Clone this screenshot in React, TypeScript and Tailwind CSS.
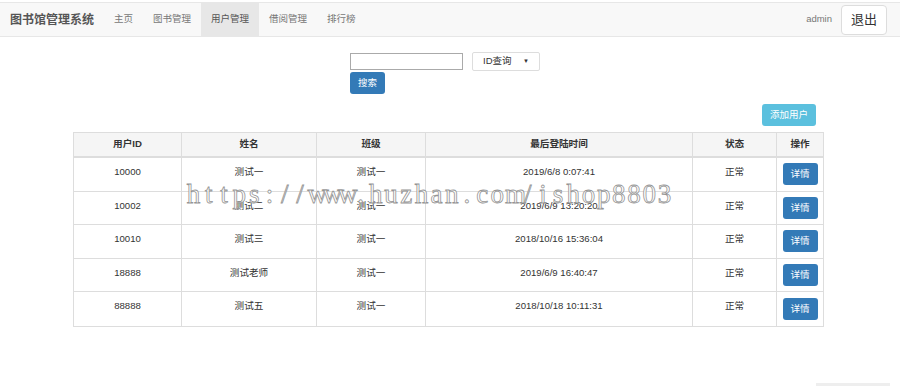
import React from "react";

const rows = [
  ["10000", "测试一", "测试一", "2019/6/8 0:07:41", "正常"],
  ["10002", "测试二", "测试一", "2019/6/9 13:20:20", "正常"],
  ["10010", "测试三", "测试一", "2018/10/16 15:36:04", "正常"],
  ["18888", "测试老师", "测试一", "2019/6/9 16:40:47", "正常"],
  ["88888", "测试五", "测试一", "2018/10/18 10:11:31", "正常"],
];

const widths = ["w-[108px]", "w-[135px]", "w-[109px]", "w-[267px]", "w-[84px]", "w-[46px]"];

const watermark = "https://www.huzhan.com/ishop8803".split("");

export default function App() {
  return (
    <div
      className="relative w-[900px] h-[387px] bg-white text-[#333] overflow-hidden"
      style={{ fontFamily: '"Liberation Sans", Arial, "Noto Sans CJK SC", sans-serif' }}
    >
      <div className="h-[2px]" />
      <div className="flex items-center h-[35px] bg-[#f8f8f8] border-t border-b border-[#e7e7e7]">
        <div className="pl-[10px] pr-[10px] text-[12px] font-bold text-[#555]">图书馆管理系统</div>
        <div className="flex h-full text-[9.5px] text-[#777]">
          <div className="px-[10px] flex items-center">主页</div>
          <div className="px-[10px] flex items-center">图书管理</div>
          <div className="px-[10px] flex items-center bg-[#e7e7e7] text-[#555]">用户管理</div>
          <div className="px-[10px] flex items-center">借阅管理</div>
          <div className="px-[10px] flex items-center">排行榜</div>
        </div>
        <div className="ml-auto flex items-center">
          <span className="text-[9.5px] text-[#777] mr-[9px]">admin</span>
          <div className="mr-[13px] w-[46px] h-[30px] flex items-center justify-center bg-white border border-[#ddd] rounded-[4px] text-[13px] text-[#333]">
            退出
          </div>
        </div>
      </div>

      <div className="flex flex-col items-start pl-[350px] pt-[15px]">
        <div className="flex items-center gap-[9px]">
          <div className="w-[113px] h-[17px] border border-[#aaa] bg-white" />
          <div className="w-[68px] h-[19px] border border-[#ddd] rounded-[2px] bg-white flex items-center justify-between px-[10px] text-[9.5px] text-[#333]">
            <span>ID查询</span>
            <span className="text-[6px]">▼</span>
          </div>
        </div>
        <div className="mt-[1px] w-[35px] h-[22px] bg-[#337ab7] rounded-[3px] text-white text-[9.5px] flex items-center justify-center">
          搜索
        </div>
      </div>

      <div className="flex justify-end pr-[84px] mt-[10px]">
        <div className="w-[54px] h-[22px] bg-[#5bc0de] rounded-[3px] text-white text-[9.5px] flex items-center justify-center">
          添加用户
        </div>
      </div>

      <div className="ml-[73px] mt-[6px] w-fit border border-[#ddd] text-[9.6px]">
        <div className="flex h-[25px] bg-[#f5f5f5] border-b-2 border-[#ddd] font-bold">
          {["用户ID", "姓名", "班级", "最后登陆时间", "状态", "操作"].map((h, i) => (
            <div
              key={h}
              className={`${widths[i]} flex items-center justify-center ${i < 5 ? "border-r border-[#ddd]" : ""}`}
            >
              {h}
            </div>
          ))}
        </div>
        {rows.map((r, ri) => (
          <div key={ri} className={`flex h-[33.6px] ${ri < rows.length - 1 ? "border-b border-[#ddd]" : ""}`}>
            {r.map((c, i) => (
              <div
                key={i}
                className={`${widths[i]} flex justify-center pt-[7px] border-r border-[#ddd]`}
              >
                {c}
              </div>
            ))}
            <div className={`${widths[5]} flex items-center justify-center`}>
              <div className="w-[35px] h-[22px] bg-[#337ab7] rounded-[3px] text-white flex items-center justify-center">
                详情
              </div>
            </div>
          </div>
        ))}
      </div>

      <div
        className="absolute left-[186px] top-[181px] flex text-[27px] leading-none text-white pointer-events-none"
        style={{ fontFamily: '"Liberation Serif", "DejaVu Serif", serif', WebkitTextStroke: "0.8px #959595" }}
      >
        {watermark.map((ch, i) => (
          <span key={i} className="inline-block w-[15.2px] text-center">
            {ch}
          </span>
        ))}
      </div>

      <div className="absolute left-[816px] top-[383px] w-[74px] h-[3px] bg-[#eee]" />
    </div>
  );
}
